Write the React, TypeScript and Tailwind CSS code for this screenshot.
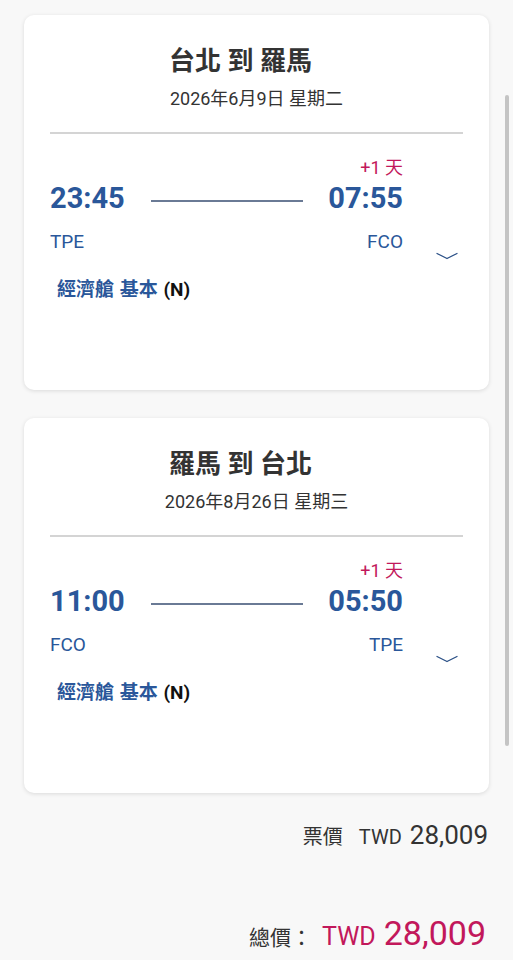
import React from 'react';

interface Leg {
  title: string;
  date: string;
  depTime: string;
  arrTime: string;
  from: string;
  to: string;
}

const legs: Leg[] = [
  { title: '台北 到 羅馬', date: '2026年6月9日 星期二', depTime: '23:45', arrTime: '07:55', from: 'TPE', to: 'FCO' },
  { title: '羅馬 到 台北', date: '2026年8月26日 星期三', depTime: '11:00', arrTime: '05:50', from: 'FCO', to: 'TPE' },
];

const font = { fontFamily: 'Roboto, "Noto Sans CJK TC", sans-serif' };

const Chevron = () => (
  <svg width="22" height="8" viewBox="0 0 22 8" fill="none">
    <path d="M1 1.5 L11 6.5 L21 1.5" stroke="#2a4f86" strokeWidth="1.3" strokeLinecap="round" strokeLinejoin="round" />
  </svg>
);

const LegCard: React.FC<{ leg: Leg }> = ({ leg }) => (
  <div className="bg-white rounded-[10px] h-[375px] px-[26px] pt-[29px] shadow-[0_1px_4px_rgba(0,0,0,0.12)]">
    <h2 className="text-center text-[26px] leading-[34px] font-bold text-[#333333] pr-[32px]">{leg.title}</h2>
    <p className="mt-[9px] text-center text-[18px] leading-[24px] text-[#333333]">{leg.date}</p>
    <div className="mt-[21px] h-[2px] bg-[#d4d4d4]" />

    <div className="flex">
      <div className="w-[353px]">
        <div className="mt-[23px] text-right text-[18px] leading-[22px] text-[#c2185b]">+1 天</div>
        <div className="mt-[1px] flex items-center h-[36px]">
          <span className="text-[29px] leading-[36px] font-bold text-[#2a579a]">{leg.depTime}</span>
          <div className="flex-1 flex justify-center pt-[6px]">
            <div className="w-[152px] h-[2px] bg-[#6a7a95]" />
          </div>
          <span className="text-[29px] leading-[36px] font-bold text-[#2a579a]">{leg.arrTime}</span>
        </div>
        <div className="mt-[14px] flex justify-between text-[19px] leading-[24px] text-[#2a579a]">
          <span>{leg.from}</span>
          <span>{leg.to}</span>
        </div>
        <div className="mt-[24px] pl-[7px] text-[19px] leading-[24px] font-bold text-[#2a579a] [word-spacing:1px]">
          經濟艙 基本 <span className="text-[#111111]">(N)</span>
        </div>
      </div>
      <div className="ml-[33px] pt-[118px]">
        <Chevron />
      </div>
    </div>
  </div>
);

const App: React.FC = () => {
  return (
    <div className="relative min-h-[960px] bg-[#f8f8f8] px-[24px] pt-[15px]" style={font}>
      <div className="flex flex-col gap-[28px]">
        {legs.map((leg) => (
          <LegCard key={leg.title} leg={leg} />
        ))}
      </div>

      <div className="mt-[26px] flex items-baseline justify-end pr-[1px] text-[#333333]">
        <span className="text-[20px] leading-[32px]">票價</span>
        <span className="ml-[16px] text-[20px] leading-[32px]">TWD</span>
        <span className="ml-[8px] text-[26px] leading-[32px]">28,009</span>
      </div>

      <div className="mt-[58px] flex items-baseline justify-end pr-[3px]">
        <span className="text-[21px] leading-[44px] text-[#333333]">總價：</span>
        <span className="ml-[10px] text-[25px] leading-[44px] text-[#c2185b]">TWD</span>
        <span className="ml-[8px] text-[34px] leading-[44px] text-[#c2185b]">28,009</span>
      </div>

      <div className="absolute right-[4px] top-[95px] w-[4px] h-[651px] rounded-full bg-[#c4c4c4]" />
    </div>
  );
};

export default App;
